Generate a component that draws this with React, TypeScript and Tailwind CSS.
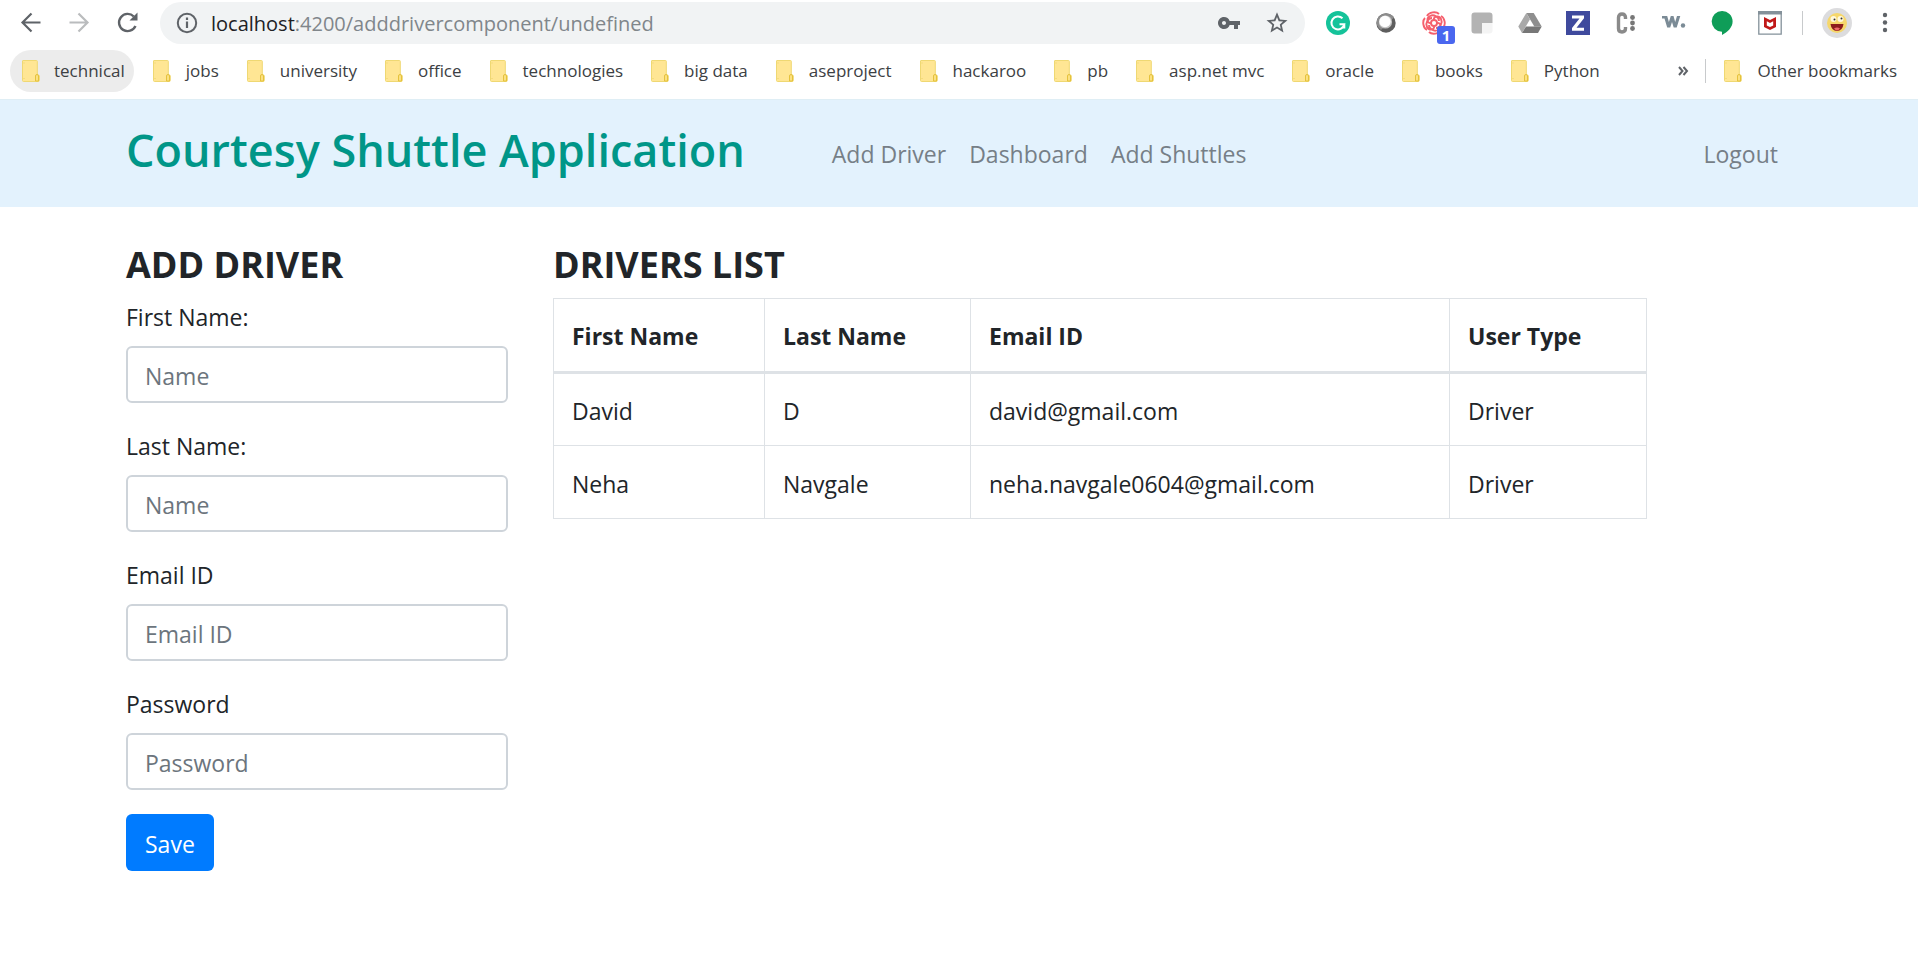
import React from "react";

const extensionClass = "flex w-6 h-6 shrink-0 items-center justify-center";

function FolderIcon() {
  return (
    <svg className="h-[22px] w-[18px] shrink-0" viewBox="0 0 18 22" aria-hidden="true">
      <path d="M1 .5h13.5q.8 0 .8.8V15h1q1 0 1 1v4.500q0 1-1 1H1.500q-1 0-1-1V1Q.5.5 1 .5z" fill="#ffe694" stroke="#efd873" strokeWidth="1" />
      <path d="M1 3h2M1 18.500h2" stroke="#f5dc7d" />
      <path d="M13.500 21v-5q0-1.500 1.500-1.500t1.500 1.500v5z" fill="#fbe183" stroke="#e5c23c" strokeWidth="1" />
    </svg>
  );
}

const bookmarks = ["technical", "jobs", "university", "office", "technologies", "big data", "aseproject", "hackaroo", "pb", "asp.net mvc", "oracle", "books", "Python"];

function Bookmark({ name, active = false }: { name: string; active?: boolean }) {
  return (
    <button
      type="button"
      className={
        active
          ? "flex h-[42px] shrink-0 items-center gap-[14px] rounded-full bg-[#ececec] pl-3 pr-[9px] whitespace-nowrap"
          : "flex h-[42px] shrink-0 items-center gap-[15px] rounded-full pl-3 pr-[9px] whitespace-nowrap"
      }
    >
      <FolderIcon />
      {name}
    </button>
  );
}

function Toolbar() {
  return (
    <div className="flex items-center pt-[2px] pl-5 pr-[21px]">
      <div className="flex shrink-0 items-center gap-6">
        <button type="button" aria-label="Back">
          <svg className="h-6 w-6" viewBox="0 0 24 24" fill="none" stroke="#5f6368" strokeWidth="2.2">
            <path d="M20.500 11.500H3M11.500 2.500l-9 9 9 9" />
          </svg>
        </button>
        <button type="button" aria-label="Forward">
          <svg className="h-6 w-6" viewBox="0 0 24 24" fill="none" stroke="#babcbe" strokeWidth="2.2">
            <path d="M1.500 11.500H19M10.500 2.500l9 9-9 9" />
          </svg>
        </button>
        <button type="button" aria-label="Reload">
          <svg className="h-6 w-6" viewBox="0 0 24 24">
            <path d="M19.500 15A8.600 8.600 0 1 1 17.800 5.500" fill="none" stroke="#5f6368" strokeWidth="2.400" />
            <path d="M21.500 1.500v8h-8z" fill="#5f6368" />
          </svg>
        </button>
      </div>
      <div className="ml-5 flex h-[42px] flex-1 items-center rounded-full bg-[#f1f3f4] pl-4 pr-4">
        <svg className="h-[22px] w-[22px] shrink-0" viewBox="0 0 22 22" aria-hidden="true">
          <circle cx="11" cy="11" r="9.200" fill="none" stroke="#5f6368" strokeWidth="2" />
          <path d="M11 9.500V16M11 5.500V8" stroke="#5f6368" strokeWidth="2.200" />
        </svg>
        <div className="ml-[13px] flex-1 pt-px text-[20px] leading-6 text-[#80868b]">
          <span className="text-[#202124]">localhost</span>:4200/adddrivercomponent/undefined
        </div>
        <button type="button" aria-label="Passwords">
          <svg className="h-6 w-6" viewBox="0 0 24 24" fill="#5f6368">
            <path d="M12.650 10A5.990 5.990 0 0 0 7 6c-3.310 0-6 2.690-6 6s2.690 6 6 6a5.990 5.990 0 0 0 5.650-4H17v4h4v-4h2v-4H12.650zM7 14c-1.100 0-2-.9-2-2s.9-2 2-2 2 .9 2 2-.9 2-2 2z" />
          </svg>
        </button>
        <button type="button" aria-label="Bookmark this page" className="ml-6">
          <svg className="h-6 w-6" viewBox="0 0 24 24" fill="#5f6368">
            <path d="M22.500 9.240l-7.490-.72L12 1.300 8.990 8.530 1.500 9.240l5.760 4.830L5.520 21.500 12 17.570l6.480 3.930-1.730-7.430L22.500 9.240zM12 15.400l-3.760 2.270 1-4.280-3.320-2.880 4.380-.38L12 6.100l1.710 4.040 4.380.38-3.320 2.880 1 4.280L12 15.400z" />
          </svg>
        </button>
      </div>
      <div className="ml-[21px] flex shrink-0 items-center gap-6">
        <button type="button" aria-label="Grammar" className={extensionClass}>
          <svg viewBox="0 0 24 24" className="h-6 w-6">
            <circle cx="12" cy="12" r="12" fill="#15c39a" />
            <path d="M16.500 7.300A6.500 6.500 0 1 0 18.300 13.200H13.500M18.300 13v4.500" fill="none" stroke="#fff" strokeWidth="2" />
          </svg>
        </button>
        <button type="button" aria-label="Sphere" className={extensionClass}>
          <svg viewBox="0 0 24 24" className="h-6 w-6">
            <circle cx="12" cy="12" r="9.700" fill="#5e5e5e" />
            <path d="M3.300 8A9.700 9.700 0 0 1 20 6.500L7 19A9.700 9.700 0 0 1 3.300 8z" fill="#8d8d8d" />
            <circle cx="11.500" cy="11" r="6.600" fill="#c4c4c4" />
            <circle cx="11" cy="10.500" r="5.700" fill="#fff" />
          </svg>
        </button>
        <button type="button" aria-label="Rose, 1 notification" className="relative h-6 w-6 shrink-0">
          <svg viewBox="0 0 24 24" className="h-6 w-6" fill="none" stroke="#f5606d" strokeWidth="1.900">
            <circle cx="12" cy="12" r="3" />
            <path d="M12 9c-1-4 5-5 7-1s-1 9-5 9M15 12c4-1 5 5 1 7s-9-1-9-5M12 15c1 4-5 5-7 1s1-9 5-9M9 12c-4 1-5-5-1-7s9 1 9 5" />
            <path d="M5 5C7 1 14 0 17 3M19 5c4 2 5 9 2 12M19 19c-2 4-9 5-12 2M5 19C1 17 0 10 3 7" />
          </svg>
          <span className="absolute top-[15px] left-[15px] flex h-[18px] w-[18px] items-center justify-center rounded-[3px] bg-[#4a67ef] text-[15px] leading-4 font-bold text-white">1</span>
        </button>
        <button type="button" aria-label="Flip" className={extensionClass}>
          <svg viewBox="0 0 24 24" className="h-6 w-6">
            <path d="M1.500 4.500q0-3 3-3h15q3 0 3 3V12H12v10.500H4.500q-3 0-3-3z" fill="#b3b3b3" />
            <path d="M12 12h10.500v7.500q0 3-3 3H12z" fill="#f4f4f4" />
          </svg>
        </button>
        <button type="button" aria-label="Drive" className={extensionClass}>
          <svg viewBox="0 0 24 24" className="h-6 w-6">
            <path d="M8.300 2h7.400l8 13.500h-7.400z" fill="#8e8e8e" />
            <path d="M8.300 2 12 8.300 4 22 .3 15.500z" fill="#a9a9a9" />
            <path d="M8 15.500h15.700L20 22H4z" fill="#777" />
          </svg>
        </button>
        <button type="button" aria-label="Z" className={extensionClass}>
          <svg viewBox="0 0 24 24" className="h-6 w-6">
            <path d="M0 0h24v24H0z" fill="#3f4a9d" />
            <path d="M6 4.500h12v2.700L10.500 16.800H18v3H6v-2.700l7.500-9.600H6z" fill="#fff" />
          </svg>
        </button>
        <button type="button" aria-label="C" className={extensionClass}>
          <svg viewBox="0 0 24 24" className="h-6 w-6">
            <path d="M11.500 8V6.500Q11.500 3 8 3T4.500 6.500v11Q4.500 21 8 21t3.500-3.500V16" fill="none" stroke="#8a8a8a" strokeWidth="3.400" />
            <g fill="#777"><circle cx="18.500" cy="6.500" r="2.400" /><circle cx="18.500" cy="12" r="2.400" /><circle cx="18.500" cy="17.500" r="2.400" /></g>
          </svg>
        </button>
        <button type="button" aria-label="W" className={extensionClass}>
          <svg viewBox="0 0 24 24" className="h-6 w-6">
            <path d="M0 5h5.200l1.700 6L8.800 5h2.700l1.700 6 1.800-6h3.300l-3.600 11.500h-3L10 11l-1.800 5.500h-3L2.500 7.500H0z" fill="#7b8b96" />
            <circle cx="21" cy="14.500" r="2.200" fill="#7b8b96" />
          </svg>
        </button>
        <button type="button" aria-label="Hangouts" className={extensionClass}>
          <svg viewBox="0 0 24 24" className="h-6 w-6">
            <path d="M12 0a10.500 10.500 0 0 1 10.600 10.500c0 6-5 10.500-10.600 13.500v-3.300A10.300 10.300 0 0 1 12 0z" fill="#0f9d58" />
          </svg>
        </button>
        <button type="button" aria-label="Web advisor" className={extensionClass}>
          <svg viewBox="0 0 24 24" className="h-6 w-6">
            <path d="M.8.800h22.400v22.400H.8z" fill="#fff" stroke="#84919a" strokeWidth="1.300" />
            <path d="M0 0h24v3.500H0z" fill="#84919a" />
            <path d="M6 6 12 9l6-3V16l-6 3-6-3z" fill="#c01818" />
            <path d="M8.800 10.300l3.200 1.600 3.200-1.600v4.200L12 16l-3.200-1.500z" fill="#fff" />
          </svg>
        </button>
      </div>
      <div className="ml-5 h-6 w-px shrink-0 bg-[#c8cacc]" />
      <button type="button" aria-label="Profile" className="ml-[19px] h-[30px] w-[30px] shrink-0">
        <svg viewBox="0 0 30 30" className="h-[30px] w-[30px]">
          <circle cx="15" cy="15" r="15" fill="#dcdcde" />
          <circle cx="15" cy="15" r="10" fill="#f6d76b" />
          <circle cx="11.500" cy="11" r="3" fill="#fff8dc" /><circle cx="18.500" cy="11" r="3" fill="#fff8dc" />
          <circle cx="12.500" cy="11.500" r="1" fill="#333" /><circle cx="19.500" cy="10.500" r="1" fill="#333" />
          <path d="M8.500 16h13q-1 7-6.500 7t-6.500-7z" fill="#8c1c1c" />
          <path d="M12 20.500q3-2 6 0-1.500 2-3 2t-3-2z" fill="#ee6a6a" />
        </svg>
      </button>
      <button type="button" aria-label="Menu" className="ml-[21px] h-6 w-6 shrink-0">
        <svg viewBox="0 0 24 24" className="h-6 w-6" fill="#5f6368">
          <circle cx="12" cy="4" r="2.200" /><circle cx="12" cy="11.500" r="2.200" /><circle cx="12" cy="19" r="2.200" />
        </svg>
      </button>
    </div>
  );
}

function BookmarkBar() {
  return (
    <div className="flex items-center justify-between pt-[6px] pb-[7px] pl-[10px] pr-3 text-[17px] leading-6 text-[#3c4043]">
      <div className="flex items-center gap-[7px]">
        {bookmarks.map((name, i) => (
          <Bookmark key={name} name={name} active={i === 0} />
        ))}
      </div>
      <div className="flex items-center">
        <button type="button" aria-label="More bookmarks">
          <svg className="h-3 w-3" viewBox="0 0 12 12" fill="none" stroke="#5f6368" strokeWidth="2">
            <path d="M2 2l3.500 4L2 10M6.500 2l3.500 4-3.500 4" />
          </svg>
        </button>
        <div className="mr-[6px] ml-4 h-6 w-px bg-[#c8cacc]" />
        <Bookmark name="Other bookmarks" />
      </div>
    </div>
  );
}

const navLinks = ["Add Driver", "Dashboard", "Add Shuttles"];

function NavBar() {
  return (
    <nav className="flex items-center border-t border-[#dfeef5] bg-[#e3f2fd] px-[126px] pt-[21px] pb-[28px] text-[23px] leading-9 text-[#767f87]">
      <h1 className="text-[45px] leading-[58px] font-semibold whitespace-nowrap text-[#009688]">Courtesy Shuttle Application</h1>
      <div className="ml-[87px] flex gap-[23px] pt-2">
        {navLinks.map((name) => (
          <a key={name} href="#" className="whitespace-nowrap">{name}</a>
        ))}
      </div>
      <a href="#" className="mr-[14px] ml-auto pt-2">Logout</a>
    </nav>
  );
}

const fields = [
  { id: "first-name", label: "First Name:", placeholder: "Name", type: "text" },
  { id: "last-name", label: "Last Name:", placeholder: "Name", type: "text" },
  { id: "email", label: "Email ID", placeholder: "Email ID", type: "email" },
  { id: "password", label: "Password", placeholder: "Password", type: "password" },
];

function DriverForm() {
  return (
    <form className="w-[382px] shrink-0" onSubmit={(e) => e.preventDefault()}>
      <h2 className="mb-3 text-[36px] leading-[43px] font-bold">ADD DRIVER</h2>
      {fields.map((f) => (
        <div key={f.id} className="mb-6">
          <label htmlFor={f.id} className="mb-[10px] block leading-[38px]">{f.label}</label>
          <input
            id={f.id}
            type={f.type}
            placeholder={f.placeholder}
            className="block h-[57px] w-full rounded-[6px] border-2 border-[#ced4da] bg-white px-[17px] pt-[3px] placeholder:text-[#6c757d]"
          />
        </div>
      ))}
      <button type="submit" className="h-[57px] rounded-[6px] bg-[#007bff] px-[19px] pt-1 text-white">Save</button>
    </form>
  );
}

const columns = ["First Name", "Last Name", "Email ID", "User Type"];
const drivers = [
  ["David", "D", "david@gmail.com", "Driver"],
  ["Neha", "Navgale", "neha.navgale0604@gmail.com", "Driver"],
];

function DriversTable() {
  return (
    <section className="min-w-0 flex-1">
      <h2 className="mb-3 text-[36px] leading-[43px] font-bold">DRIVERS LIST</h2>
      <table className="w-full table-fixed border-collapse text-left leading-9">
        <colgroup>
          <col className="w-[211px]" />
          <col className="w-[206px]" />
          <col />
          <col className="w-[197px]" />
        </colgroup>
        <thead>
          <tr>
            {columns.map((c) => (
              <th key={c} className="h-[74px] border border-b-3 border-[#dee2e6] px-[18px] pt-[2px] font-bold">{c}</th>
            ))}
          </tr>
        </thead>
        <tbody>
          {drivers.map((row) => (
            <tr key={row[0]}>
              {row.map((cell, i) => (
                <td key={i} className="h-[73px] border border-[#dee2e6] px-[18px] pt-[3px]">{cell}</td>
              ))}
            </tr>
          ))}
        </tbody>
      </table>
    </section>
  );
}

export default function App() {
  return (
    <div className="min-h-screen bg-white font-['Open_Sans','Noto_Sans',sans-serif] text-[#212529]">
      <header>
        <Toolbar />
        <BookmarkBar />
      </header>
      <NavBar />
      <main className="flex gap-[45px] pt-9 pr-[271px] pb-12 pl-[126px] text-[23px]">
        <DriverForm />
        <DriversTable />
      </main>
    </div>
  );
}
